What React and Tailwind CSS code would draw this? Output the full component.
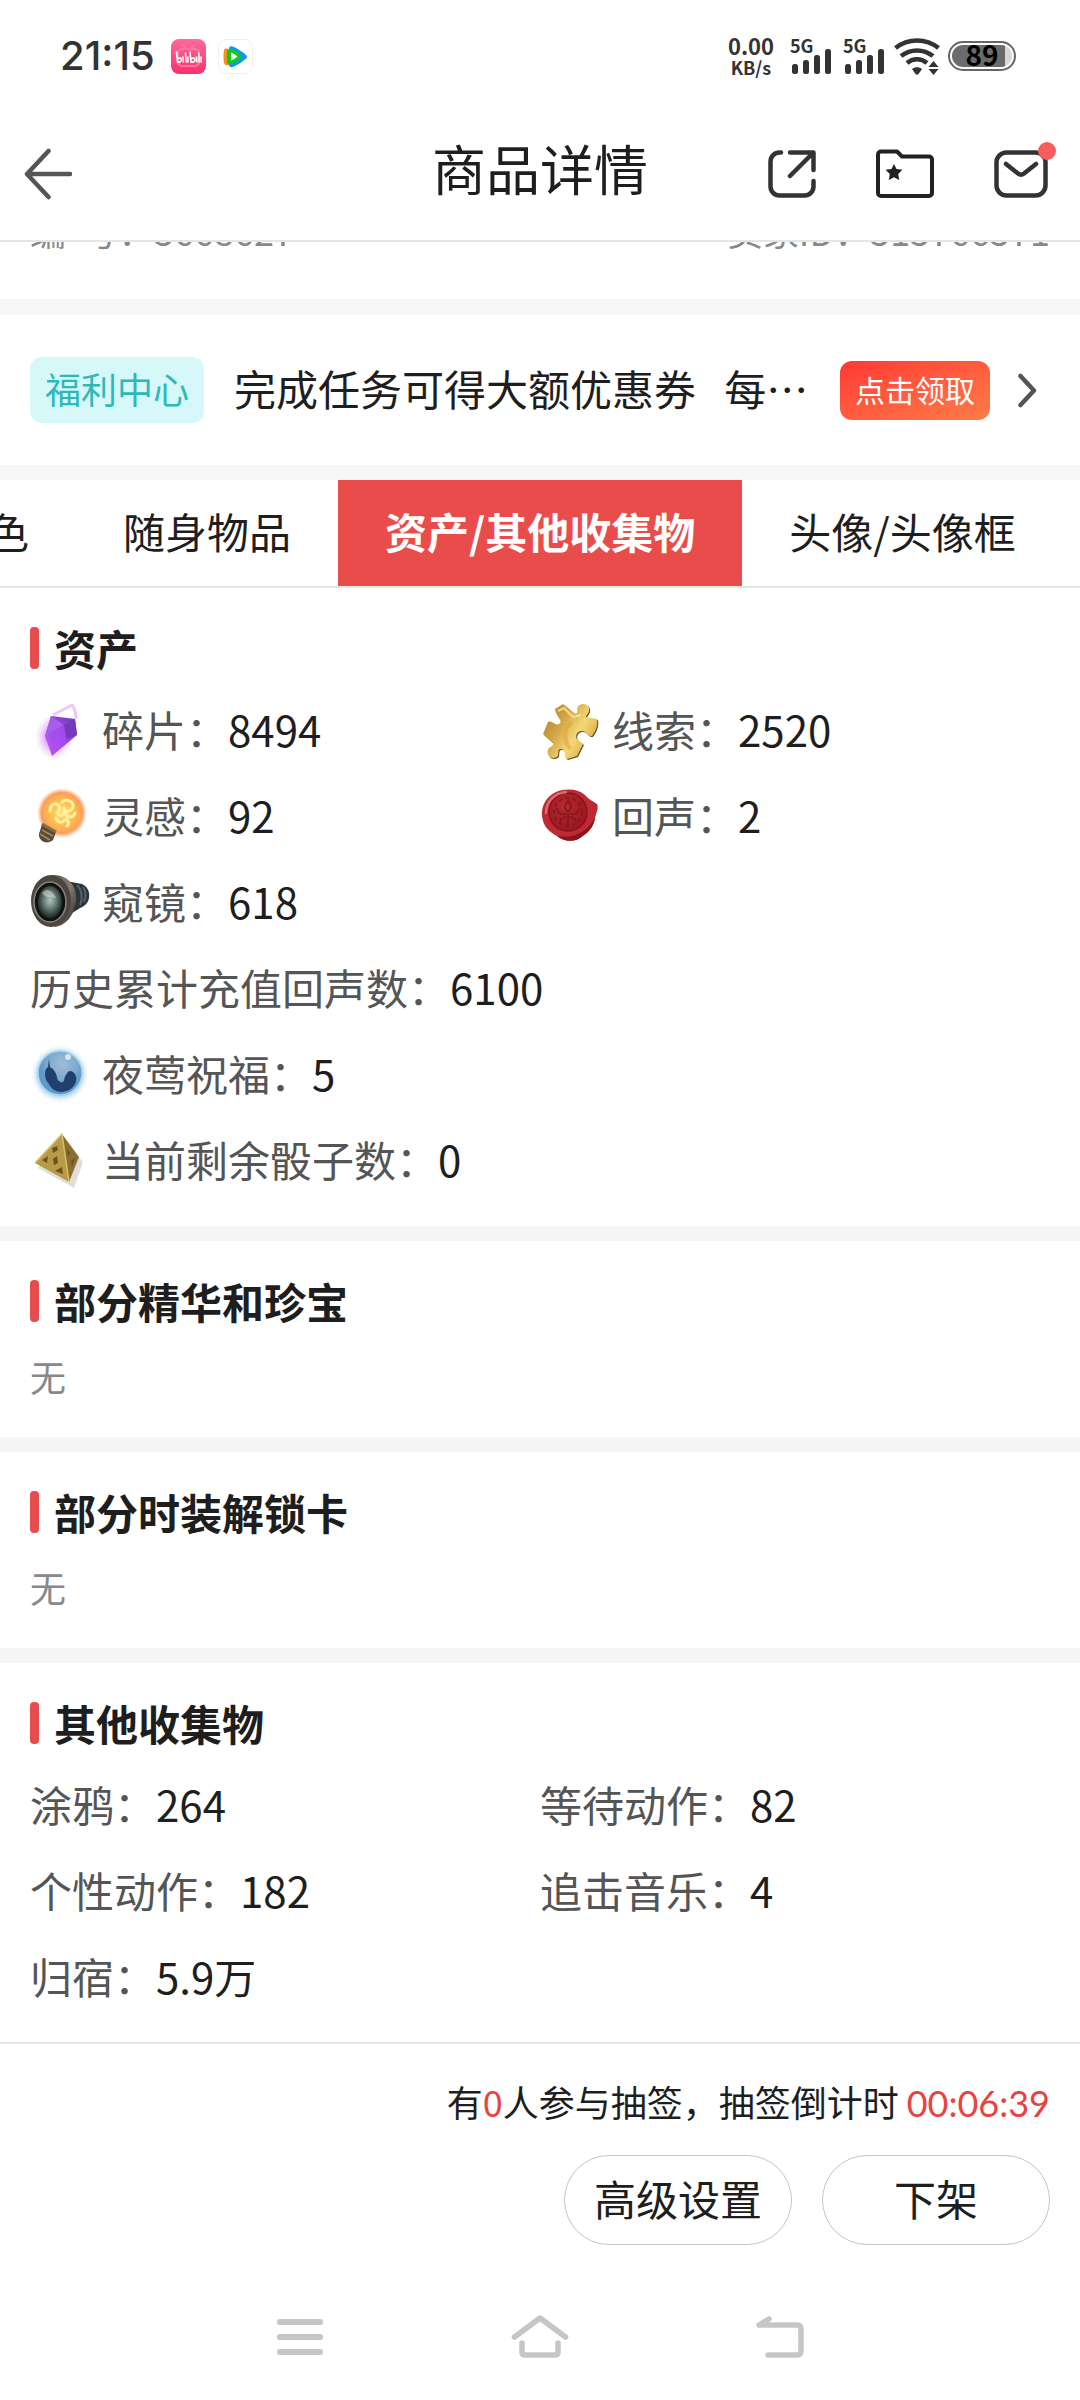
import React, { useState } from 'react';

const tabs = ["角色", "随身物品", "资产/其他收集物", "头像/头像框"]

const BilibiliIcon = () => (
  <svg className="size-[35px]" viewBox="0 0 35 35" aria-hidden="true">
    <defs>
      <linearGradient id="bili" x1="0" y1="0" x2="0" y2="1">
        <stop offset="0" stopColor="#ff6a9c" />
        <stop offset="1" stopColor="#fb2f6c" />
      </linearGradient>
    </defs>
    <rect width="35" height="35" rx="8" fill="url(#bili)" />
    <g fill="none" stroke="#ff77a5" strokeWidth="2" strokeLinecap="round">
      <rect x="7" y="10" width="21" height="17" rx="4" />
      <path d="M12 6l3 3M23 6l-3 3" />
    </g>
    <g fill="none" stroke="#fff" strokeWidth="1.6" strokeLinecap="round">
      <path d="M5.500 13l1 10c2 .5 4-.5 4-2.300s-2-2-3.500-1" />
      <path d="M12 18l.4 5M14.500 14l.6 9M16.800 18l.2 5" />
      <path d="M19 13l1 10c2 .5 4-.5 4-2.300s-2-2-3.500-1" />
      <path d="M25.500 18l.4 5M27.700 14l.6 9M30 18l.2 5" />
    </g>
  </svg>
)

const VideoIcon = () => (
  <svg className="size-[35px]" viewBox="0 0 35 35" aria-hidden="true">
    <rect x=".5" y=".5" width="34" height="34" rx="8" fill="#fff" stroke="#efefef" />
    <path d="M6 11c1-2 3-1.500 5-1v16c-2 .5-4 .5-5-2-.7-4-.7-9 0-13z" fill="#ff8a1e" />
    <path d="M11 9c1-2.500 3-2 5-1 4 2 8 4.500 11.500 7.500 2 1.700 2 3 0 4.500C24 23 20 25.500 16 27.500c-2 1-4 1-5-1z" fill="#1595ee" />
    <path d="M9.500 11c4-2 12 2 14 6.500-3 6-10 8-14 7.500-1-4-1-10 0-14z" fill="#0ccb1c" />
    <path d="M13 13.500c2.500 1 4.500 2.500 6.500 4-2 1.700-4 3-6.500 4z" fill="#fff" />
  </svg>
)

const Signal = () => (
  <div className="flex flex-col w-[42px]">
    <span className="text-lg leading-3 font-bold">5G</span>
    <svg className="w-[42px] h-[25px] -mt-0.5" viewBox="0 0 42 25" fill="#333" aria-hidden="true">
      <rect x="2" y="15" width="6" height="10" rx="2.500" />
      <rect x="13" y="11" width="6" height="14" rx="2.500" />
      <rect x="24" y="6" width="6" height="19" rx="2.500" />
      <rect x="35" y="0" width="6" height="25" rx="2.500" />
    </svg>
  </div>
)

const Wifi = () => (
  <svg className="w-[46px] h-[37px]" viewBox="0 0 46 37" aria-hidden="true">
    <g fill="none" stroke="#333" strokeWidth="4.500">
      <path d="M1.500 10C14 0 32 0 44.500 10" />
      <path d="M7 18c9.500-7.500 22.500-7.500 32 0" />
      <path d="M13 25c6-5 14-5 20 0" />
    </g>
    <path d="M18 31c3-2.300 7-2.300 10 0l-3.500 5c-1 1-2 1-3 0z" fill="#333" />
    <path d="M39.500 23l5 6h-10zM39.500 37l5-6h-10z" fill="#333" />
  </svg>
)

const BackArrow = () => (
  <svg className="w-12 h-[52px]" viewBox="0 0 48 52" fill="none" stroke="#555" strokeWidth="4.500" strokeLinecap="round" strokeLinejoin="round" aria-hidden="true">
    <path d="M24.500 3L3 26l21.500 23M3 26h43" />
  </svg>
)

const ShareIcon = () => (
  <svg className="size-12" viewBox="0 0 48 48" fill="none" stroke="#333" strokeWidth="4.500" strokeLinecap="round" strokeLinejoin="round" aria-hidden="true">
    <path d="M13 2.500h-1.500a9 9 0 0 0-9 9v25a9 9 0 0 0 9 9h25a9 9 0 0 0 9-9V31" />
    <path d="M22 2.500h23.500V20M45 3L22 26" />
  </svg>
)

const FolderIcon = () => (
  <svg className="w-[58px] h-[50px]" viewBox="0 0 58 50" aria-hidden="true">
    <path d="M5 2.500h16l5 5h27a3 3 0 0 1 3 3V44a3 3 0 0 1-3 3H5a3 3 0 0 1-3-3V5.500a3 3 0 0 1 3-3z" fill="none" stroke="#222" strokeWidth="4" strokeLinejoin="round" />
    <path d="M18 15l2.500 5 6 .8-4.300 4.200 1 6-5.200-2.700-5.200 2.700 1-6-4.300-4.200 6-.8z" fill="#222" />
  </svg>
)

const MailIcon = () => (
  <svg className="w-[54px] h-[48px]" viewBox="0 0 54 48" fill="none" stroke="#333" strokeWidth="4.500" strokeLinecap="round" strokeLinejoin="round" aria-hidden="true">
    <rect x="2.500" y="2.500" width="49" height="43" rx="10" />
    <path d="M12 14l12 9.500c2 1.500 4 1.500 6 0L42 14" />
  </svg>
)

const Crystal = () => (
  <svg className="size-[60px] shrink-0" viewBox="0 0 60 60" aria-hidden="true">
    <defs>
      <radialGradient id="cryGlow">
        <stop offset="0.3" stopColor="#cf6ef8" stopOpacity=".85" />
        <stop offset="1" stopColor="#e9b3fb" stopOpacity="0" />
      </radialGradient>
      <linearGradient id="cry" x1="1" y1="0" x2="0" y2="1">
        <stop offset="0" stopColor="#6f35b5" />
        <stop offset=".5" stopColor="#9c4ae6" />
        <stop offset="1" stopColor="#c65cf8" />
      </linearGradient>
    </defs>
    <ellipse cx="24" cy="36" rx="19" ry="23" fill="url(#cryGlow)" />
    <path d="M23 14L42 4c3 4 4 9 4 14" fill="none" stroke="#edc9f8" strokeWidth="3" strokeLinejoin="round" />
    <path d="M21 15l24 3 2 16-25 21-7-20z" fill="url(#cry)" />
    <path d="M21 15l13 9-19 11z" fill="#a85ceb" />
    <path d="M34 24l11-6 2 16-10 4z" fill="#7539c0" />
    <path d="M34 24l2 14-14 17-2-20z" fill="#a94df0" opacity=".6" />
  </svg>
)

const Bulb = () => (
  <svg className="size-[60px] shrink-0" viewBox="0 0 60 60" aria-hidden="true">
    <defs>
      <radialGradient id="bulb">
        <stop offset="0" stopColor="#ffe36a" />
        <stop offset=".55" stopColor="#fdb94e" />
        <stop offset=".82" stopColor="#fb9f5c" />
        <stop offset="1" stopColor="#fbb08c" stopOpacity="0" />
      </radialGradient>
    </defs>
    <path d="M11 31l3 8 9 6 9-3-15-18z" fill="#f8aa5a" />
    <circle cx="32" cy="26" r="25" fill="url(#bulb)" />
    <g fill="none" stroke="#fff0a0" strokeWidth="3" strokeLinecap="round">
      <path d="M20 24c0-7 6-9 9-5s-4 7 0 9 7-3 5-7M32 15c5-4 12 0 11 5s-7 3-7 7 8 4 9-1M26 31c1 5 7 5 9 2s5 4 2 6" />
    </g>
    <path d="M12 37l14 8-3 8c-3 3-8 3-11 1-3-3-4-6-2-10z" fill="#5b4a34" />
    <path d="M12 43l11 6M10 47l10 6" stroke="#a08a63" strokeWidth="1.500" />
    <path d="M12 37l14 8" stroke="#8b6c3f" strokeWidth="3" />
  </svg>
)

const Lens = () => (
  <svg className="size-[60px] shrink-0" viewBox="0 0 60 60" aria-hidden="true">
    <defs>
      <radialGradient id="glass" cx=".5" cy=".45">
        <stop offset="0" stopColor="#b4c4bb" />
        <stop offset=".5" stopColor="#6a827b" />
        <stop offset="1" stopColor="#26332f" />
      </radialGradient>
      <linearGradient id="barrel" x1="0" y1="0" x2="1" y2="1">
        <stop offset="0" stopColor="#6d645d" />
        <stop offset=".5" stopColor="#857a71" />
        <stop offset="1" stopColor="#25211f" />
      </linearGradient>
    </defs>
    <path d="M36 8l16 3c6 3 8 8 7 14-1 5-4 8-9 10L36 44z" fill="#2d3439" />
    <path d="M47 12c5 5 6 13 3 20M53 14c3 4 3 10 1 15" fill="none" stroke="#56636b" strokeWidth="2" />
    <path d="M22 2c16-1 26 12 24 27-2 14-11 24-21 25z" fill="url(#barrel)" />
    <ellipse cx="21" cy="28" rx="20" ry="26" fill="#4b4642" />
    <ellipse cx="20" cy="29" rx="16" ry="20" fill="#101312" stroke="#8d857c" strokeWidth="1.500" />
    <ellipse cx="20" cy="29" rx="12" ry="16" fill="url(#glass)" />
    <path d="M12 20c5-6 11-2 14 5-5-1-9 1-14-5z" fill="#dce6e0" opacity=".5" />
  </svg>
)

const Puzzle = () => (
  <svg className="size-[60px] shrink-0" viewBox="0 0 60 60" aria-hidden="true">
    <defs>
      <linearGradient id="puz" x1="0" y1="0" x2="1" y2=".6">
        <stop offset="0" stopColor="#a57c2c" />
        <stop offset=".4" stopColor="#d3a645" />
        <stop offset=".7" stopColor="#f3d878" />
        <stop offset="1" stopColor="#d9ad45" />
      </linearGradient>
    </defs>
    <path transform="translate(1 1)" d="M15 8l8-5 11 9c3 1 4-1 3-4 1-6 10-7 12-1 1 5-3 7-3 9l11 2c1 6-1 12-5 17-4 1-6-5-10-5-6 0-8 7-3 10l4 3-6 12-10 3c-4-2 0-8-5-10-6-1-2 5-5 8-5 3-11-1-9-7 1-4 6-3 5-7L3 33l5-12c4-2 7 4 11 2 5-3-3-7-4-15z" fill="#6b5020" />
    <path d="M15 8l8-5 11 9c3 1 4-1 3-4 1-6 10-7 12-1 1 5-3 7-3 9l11 2c1 6-1 12-5 17-4 1-6-5-10-5-6 0-8 7-3 10l4 3-6 12-10 3c-4-2 0-8-5-10-6-1-2 5-5 8-5 3-11-1-9-7 1-4 6-3 5-7L3 33l5-12c4-2 7 4 11 2 5-3-3-7-4-15z" fill="url(#puz)" />
    <path d="M32 21c-8 6-9 17-2 27" fill="none" stroke="#e9a13f" strokeWidth="4" opacity=".6" />
    <path d="M18 10l6-3 9 9 8-2" fill="none" stroke="#f8e6a0" strokeWidth="2" opacity=".8" />
  </svg>
)

const Seal = () => (
  <svg className="size-[60px] shrink-0" viewBox="0 0 60 60" aria-hidden="true">
    <defs>
      <radialGradient id="seal" cx=".4" cy=".35" r=".7">
        <stop offset="0" stopColor="#b32a30" />
        <stop offset="1" stopColor="#9c151d" />
      </radialGradient>
    </defs>
    <path d="M16 5c10-4 22-3 29 3 3 4 8 6 12 9 2 5-1 9-2 14-1 7-5 13-11 17-8 8-20 7-27 1C9 45 3 39 2 29 1 18 7 9 16 5z" fill="#bd2a33" />
    <path d="M55 31c-1 7-5 13-11 17-8 8-20 7-27 1 14 3 29-2 38-18z" fill="#8a141d" />
    <circle cx="28" cy="25" r="19" fill="url(#seal)" stroke="#86151d" strokeWidth="1.500" />
    <path d="M6 26c0-12 9-20 20-21" fill="none" stroke="#dd6a71" strokeWidth="2.500" strokeLinecap="round" />
    <g fill="none" stroke="#86151d" strokeWidth="1.500">
      <path d="M28 14c-4 4-4 8 0 11 4-3 4-7 0-11zM17 21c0 5 4 7 10 6M39 21c0 5-4 7-10 6M28 27v12M20 36c0-4 3-6 7-6M36 36c0-4-3-6-7-6" />
      <circle cx="28" cy="25" r="14" strokeDasharray="4 3" />
    </g>
  </svg>
)

const Orb = () => (
  <svg className="size-[60px] shrink-0" viewBox="0 0 60 60" aria-hidden="true">
    <defs>
      <radialGradient id="orbGlow">
        <stop offset=".7" stopColor="#9ac8e2" />
        <stop offset="1" stopColor="#dceff3" stopOpacity="0" />
      </radialGradient>
      <radialGradient id="orb" cx=".55" cy=".3">
        <stop offset="0" stopColor="#9dbdd6" />
        <stop offset=".7" stopColor="#7ba9cf" />
        <stop offset="1" stopColor="#5f98cb" />
      </radialGradient>
    </defs>
    <circle cx="30" cy="29" r="29" fill="url(#orbGlow)" />
    <circle cx="30" cy="28" r="22" fill="url(#orb)" stroke="#a8d2ee" strokeWidth="1.500" />
    <path d="M19 14l1 8c4 2 6 6 7 10 0 3 3 6 6 5 2-2 1-6 4-8 0-3 4-4 6-2 4 3 4 8 2 12-3 5-6 7-13 8-6 0-11-3-13-8-4-4-5-10-3-15l2-2z" fill="#22406e" />
    <circle cx="38" cy="12" r="3" fill="#d3e9f8" />
  </svg>
)

const Dice = () => (
  <svg className="size-[60px] shrink-0" viewBox="0 0 60 60" aria-hidden="true">
    <path d="M32 4l20 25-9 26L7 35z" fill="#6b5a45" opacity=".2" transform="translate(1 2)" />
    <path d="M32 3L5 32l34 19z" fill="#b99a45" />
    <path d="M32 3l17 23-10 25z" fill="#8a6f30" />
    <path d="M39 51L32 3 5 32" fill="none" stroke="#d8bf6c" strokeWidth="1.500" strokeLinejoin="round" />
    <g fill="#6b5122">
      <path d="M22 17l5-2 1 4-5 3zM12 29l6-4-1 7zM23 28l4-3 1 7-4 2zM25 40l7-4 1 7z" />
      <path d="M37 17l3 5-2 4zM41 30l4-3-3 9z" />
    </g>
  </svg>
)

const assets = [
  { icon: Crystal, label: "碎片", value: "8494" },
  { icon: Puzzle, label: "线索", value: "2520" },
  { icon: Bulb, label: "灵感", value: "92" },
  { icon: Seal, label: "回声", value: "2" },
  { icon: Lens, label: "窥镜", value: "618", wide: true },
  { label: "历史累计充值回声数", value: "6100", wide: true },
  { icon: Orb, label: "夜莺祝福", value: "5", wide: true },
  { icon: Dice, label: "当前剩余骰子数", value: "0", wide: true },
]

const others = [
  { label: "涂鸦", value: "264" },
  { label: "等待动作", value: "82" },
  { label: "个性动作", value: "182" },
  { label: "追击音乐", value: "4" },
  { label: "归宿", value: "5.9万" },
]

function Section({ title, children }) {
  return (
    <section className="px-[30px] py-6">
      <h2 className="flex items-center gap-[15px] h-[72px] mb-0.5 font-bold">
        <span className="w-[9px] h-[42px] rounded bg-[#e84d4d]"></span>
        {title}
      </h2>
      {children}
    </section>
  )
}

function Stats({ items }) {
  return (
    <dl className="grid grid-cols-2">
      {items.map((item) => {
        const Icon = item.icon
        return <div key={item.label} className={item.wide ? "col-span-2 flex items-center h-[86px]" : "flex items-center h-[86px]"}>
          {Icon && <span className="mr-3 pt-1"><Icon /></span>}
          <dt className="text-[#555]">{item.label}：</dt>
          <dd>{item.value}</dd>
        </div>
      })}
    </dl>
  )
}

const Divider = () => <div className="h-[15px] bg-[#f5f5f5]"></div>

function App() {

  const [active, setActive] = useState("资产/其他收集物")

  return <div lang="zh-CN" className="min-h-screen flex flex-col bg-white text-[#1e1e1e] text-[42px] leading-[60px] font-['Noto_Sans_CJK_SC',sans-serif]">
    <div className="h-28 shrink-0 flex items-center justify-between pl-[60px] pr-16 text-[#333]">
      <div className="flex items-center">
        <span className="text-[40px] font-medium font-['Inter',sans-serif] mr-4">21:15</span>
        <BilibiliIcon />
        <span className="ml-3"><VideoIcon /></span>
      </div>
      <div className="flex items-center">
        <div className="flex flex-col items-center font-bold mr-4">
          <span className="text-[22px] leading-[22px]">0.00</span>
          <span className="text-lg leading-[22px]">KB/s</span>
        </div>
        <div className="flex gap-[11px] mr-[9px]">
          <Signal />
          <Signal />
        </div>
        <Wifi />
        <div className="ml-2 w-[68px] h-[30px] rounded-full border-2 border-[#666] p-0.5 flex">
          <div className="flex-1 rounded-full bg-linear-to-r from-[#6b6b6b] from-88% to-[#d8d8d8] to-88% flex items-center justify-center pb-1 text-[28px] leading-5 font-bold text-black">89</div>
        </div>
      </div>
    </div>

    <header className="h-[130px] shrink-0 grid grid-cols-[1fr_auto_1fr] items-center px-8 pb-1 border-b-2 border-[#e5e5e5]">
      <button aria-label="返回" className="justify-self-start -ml-2"><BackArrow /></button>
      <h1 className="text-[54px] pb-3">商品详情</h1>
      <div className="flex items-center justify-end gap-[60px]">
        <button aria-label="分享"><ShareIcon /></button>
        <button aria-label="收藏夹"><FolderIcon /></button>
        <button aria-label="消息" className="relative">
          <MailIcon />
          <span className="absolute -top-2 -right-2 size-[18px] rounded-full bg-[#f75d5d]"></span>
        </button>
      </div>
    </header>

    <main className="flex-1">
      {/* scrolled under the header */}
      <div className="overflow-hidden">
        <div className="-mt-8 pb-[49px] px-[30px] flex justify-between text-4xl/10 text-[#888]">
          <span className="whitespace-pre">编  号：5668627</span>
          <span>卖家ID：515766571</span>
        </div>
      </div>
      <div className="h-4 bg-[#f7f7f7]"></div>

      <div className="h-[150px] px-[30px] flex items-center">
        <span className="rounded-xl bg-[#d6f8f8] text-[#2fb8b8] px-[15px] pb-1 text-4xl leading-[62px]">福利中心</span>
        <p className="ml-[30px] pb-1 flex-1 whitespace-pre">完成任务可得大额优惠券   每…</p>
        <button className="rounded-xl bg-linear-to-br from-[#ff3535] to-[#ff7a48] text-white text-3xl leading-[56px] px-[15px] pb-[3px] mr-7">点击领取</button>
        <svg className="w-8 h-9" viewBox="0 0 32 36" fill="none" stroke="#555" strokeWidth="4.500" strokeLinecap="round" strokeLinejoin="round" aria-hidden="true">
          <path d="M2.500 4L16 18.500 2.500 33" />
        </svg>
      </div>
      <div className="h-[15px] bg-[#f7f7f7]"></div>

      <nav className="overflow-hidden border-b-2 border-[#e5e5e5]">
        <div className="flex -ml-[102px]">
          {tabs.map((tab) => (
            <button
              key={tab}
              onClick={() => { setActive(tab) }}
              className={tab === active ? "shrink-0 px-[47px] pb-1 h-[106px] bg-[#e84d4b] text-white font-bold" : "shrink-0 px-[47px] pb-1 h-[106px]"}>
              {tab}
            </button>
          ))}
        </div>
      </nav>

      <Section title="资产">
        <Stats items={assets} />
      </Section>
      <Divider />
      <Section title="部分精华和珍宝">
        <p className="text-4xl leading-[74px] text-[#888]">无</p>
      </Section>
      <Divider />
      <Section title="部分时装解锁卡">
        <p className="text-4xl leading-[74px] text-[#888]">无</p>
      </Section>
      <Divider />
      <div className="-mb-6">
        <Section title="其他收集物">
          <Stats items={others} />
        </Section>
      </div>
    </main>

    <footer className="border-t-2 border-[#e5e5e5] pt-[30px] bg-white">
      <p className="px-[30px] text-right text-4xl leading-[54px]">
        有<span className="text-[#e8433f]">0</span>人参与抽签，抽签倒计时 <span className="text-[#e8433f] leading-none font-['Lato',sans-serif]">00:06:39</span>
      </p>
      <div className="flex justify-end gap-[30px] px-[30px] mt-[27px] mb-[29px]">
        <button className="w-[228px] h-[90px] pb-1 rounded-full border border-[#c4c4c4]">高级设置</button>
        <button className="w-[228px] h-[90px] pb-1 rounded-full border border-[#c4c4c4]">下架</button>
      </div>
      <div className="h-[126px] flex items-center justify-center gap-[180px]">
        <button aria-label="菜单">
          <svg className="size-[60px]" viewBox="0 0 60 60" fill="#c6c6c6" aria-hidden="true">
            <rect x="7" y="12" width="46" height="6" rx="2.500" />
            <rect x="7" y="27" width="46" height="6" rx="2.500" />
            <rect x="7" y="42" width="46" height="6" rx="2.500" />
          </svg>
        </button>
        <button aria-label="主页">
          <svg className="size-[60px]" viewBox="0 0 60 60" fill="none" stroke="#c6c6c6" strokeWidth="5.500" strokeLinecap="round" strokeLinejoin="round" aria-hidden="true">
            <path d="M4.500 30L30 11l25.500 19M12 36v9q0 3 3 3h30q3 0 3-3v-9" />
          </svg>
        </button>
        <button aria-label="后退">
          <svg className="size-[60px]" viewBox="0 0 60 60" fill="none" stroke="#c6c6c6" strokeWidth="5.500" strokeLinecap="round" strokeLinejoin="round" aria-hidden="true">
            <path d="M19 12L9 18h38q4 0 4 4v22q0 4-4 4H18" />
          </svg>
        </button>
      </div>
    </footer>
  </div>
}
export default App;
